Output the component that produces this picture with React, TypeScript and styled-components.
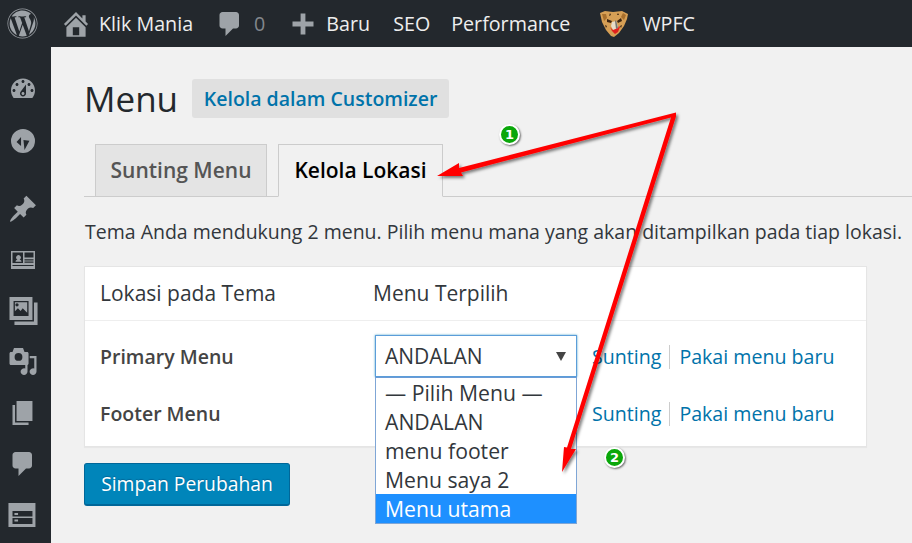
import React from 'react';
import styled, { createGlobalStyle } from 'styled-components';
import { FaWordpress } from 'react-icons/fa';

const GlobalStyle = createGlobalStyle`
    html, body { margin: 0; padding: 0; background: #f1f1f1; }
    body { font-family: "Open Sans", "Noto Sans", sans-serif; overflow: hidden; }
    * { box-sizing: border-box; }
`;

const Page = styled.div`
    position: relative;
    width: 912px;
    height: 543px;
    overflow: hidden;
    display: grid;
    grid-template-columns: 51px 1fr;
    grid-template-rows: 47px 1fr;
    background: #f1f1f1;
    color: #32373c;
`;

const TopBar = styled.header`
    grid-column: 1 / 3;
    display: flex;
    align-items: center;
    background: #23282d;
    color: #eee;
    font-size: 19.7px;
    padding-left: 7px;
`;

const BarItem = styled.div<{ $gap?: number; $left?: number }>`
    display: flex;
    align-items: center;
    gap: ${p => p.$gap ?? 0}px;
    margin-left: ${p => p.$left ?? 0}px;
    white-space: nowrap;
`;

const BarIcon = styled.svg<{ $size?: number }>`
    width: ${p => p.$size ?? 30}px;
    height: ${p => p.$size ?? 30}px;
    fill: #9ea3a8;
    display: block;
`;

const Muted = styled.span`
    color: #82878c;
`;

const SideBar = styled.nav`
    background: #23282d;
    display: flex;
    flex-direction: column;
    align-items: center;
    padding: 27px 6px 0 0;
`;

const SideIcon = styled.svg<{ $top: number }>`
    width: 30px;
    height: 30px;
    fill: #9ea3a8;
    margin-top: ${p => p.$top}px;
    flex: none;
`;

const Content = styled.main`
    padding: 32px 0 0 33px;
`;

const TitleRow = styled.div`
    display: flex;
    align-items: center;
    gap: 14px;
    height: 39px;
`;

const Title = styled.h1`
    margin: 0;
    font-size: 35px;
    font-weight: 400;
    line-height: 39px;
    color: #23282d;
`;

const CustomizerLink = styled.a`
    display: flex;
    align-items: center;
    height: 39px;
    width: 257px;
    justify-content: center;
    background: #e0e0e0;
    border-radius: 3px;
    color: #0073aa;
    font-size: 19.5px;
    font-weight: 600;
`;

const Tabs = styled.div`
    display: flex;
    gap: 11px;
    margin-top: 26px;
    padding-left: 11px;
    border-bottom: 1px solid #ccc;
    height: 53px;
`;

const Tab = styled.div<{ $active?: boolean; $width: number }>`
    width: ${p => p.$width}px;
    height: 53px;
    display: flex;
    align-items: center;
    justify-content: center;
    border: 1px solid #ccc;
    border-bottom: ${p => (p.$active ? '1px solid #f1f1f1' : '1px solid #ccc')};
    background: ${p => (p.$active ? '#f1f1f1' : '#e4e4e4')};
    color: ${p => (p.$active ? '#000' : '#555')};
    font-size: 21px;
    font-weight: 600;
    padding-bottom: 2px;
`;

const Intro = styled.p`
    margin: 21px 0 0 1px;
    font-size: 19.5px;
    line-height: 28px;
    white-space: nowrap;
`;

const Card = styled.section`
    margin-top: 20px;
    width: 783px;
    height: 181px;
    background: #fff;
    border: 1px solid #e5e5e5;
    box-shadow: 0 1px 1px rgba(0, 0, 0, 0.04);
`;

const HeadRow = styled.div`
    display: grid;
    grid-template-columns: 273px 1fr;
    align-items: center;
    padding: 0 0 2px 15px;
    height: 54px;
    font-size: 21px;
    border-bottom: 1px solid #eee;
`;

const RowList = styled.div`
    padding-top: 7px;
`;

const Row = styled.div`
    display: grid;
    grid-template-columns: 273px 219px 1fr;
    align-items: center;
    padding-left: 15px;
    height: 57px;
`;

const RowLabel = styled.div`
    font-weight: 600;
    font-size: 19.5px;
    color: #444;
`;

const SelectBox = styled.div`
    position: relative;
    margin: 0 0 1px 2px;
    width: 202px;
    height: 42px;
    display: flex;
    align-items: center;
    padding-left: 9px;
    background: #fff;
    border: 1px solid #5b9dd9;
    box-shadow: 0 0 2px rgba(30, 140, 190, 0.8);
    color: #32373c;
    font-size: 21px;
`;

const Caret = styled.span`
    position: absolute;
    right: 10px;
    top: 16px;
    width: 0;
    height: 0;
    border-left: 5px solid transparent;
    border-right: 5px solid transparent;
    border-top: 9px solid #444;
`;

const Dropdown = styled.ul`
    position: absolute;
    left: -1px;
    top: 41px;
    width: 202px;
    margin: 0;
    padding: 0;
    list-style: none;
    background: #fff;
    border: 1px solid #7fa6d6;
    border-top: 1px solid #6a9bd6;
    z-index: 2;
`;

const Option = styled.li<{ $selected?: boolean }>`
    height: 29px;
    line-height: 29px;
    padding-left: 9px;
    font-size: 21.2px;
    white-space: nowrap;
    background: ${p => (p.$selected ? '#1e90ff' : 'transparent')};
    color: ${p => (p.$selected ? '#fff' : '#32373c')};
`;

const Links = styled.div`
    display: flex;
    align-items: center;
    font-size: 19.6px;
    color: #0073aa;
`;

const Divider = styled.span`
    width: 1px;
    height: 24px;
    background: #ccc;
    margin: 0 9px 0 8px;
`;

const SaveButton = styled.button`
    display: block;
    margin-top: 16px;
    width: 206px;
    height: 43px;
    border: 1px solid #006799;
    border-bottom-width: 2px;
    border-radius: 3px;
    background: #0085ba;
    color: #fff;
    font-family: inherit;
    font-size: 19.3px;
    padding: 0 0 2px;
    text-shadow: 0 -1px 1px #006799;
`;

const ArrowLayer = styled.svg`
    position: absolute;
    inset: 0;
    width: 912px;
    height: 543px;
    pointer-events: none;
    z-index: 3;
`;

const Badge = styled.span<{ $x: number; $y: number }>`
    position: absolute;
    left: ${p => p.$x}px;
    top: ${p => p.$y}px;
    width: 21px;
    height: 21px;
    border-radius: 50%;
    background: #0aa70a;
    border: 2px solid #fff;
    box-shadow: 1px 1px 2px rgba(0, 0, 0, 0.55);
    color: #fff;
    font: 700 13px/17px "DejaVu Sans", sans-serif;
    text-align: center;
    z-index: 4;
`;

const Home = () => (
    <BarIcon $size={32} viewBox="0 0 20 20"><path d="M16 8.5l1.53 1.53-1.06 1.06L10 4.62l-6.47 6.47-1.06-1.06L10 2.5l4 4v-2h2v4zm-6-2.46l6 5.99V18H4v-5.97zM12 17v-5H8v5h4z" /></BarIcon>
);

const Comment = () => (
    <BarIcon viewBox="0 0 20 20"><path d="M5 2h9c1.1 0 2 .9 2 2v7c0 1.1-.9 2-2 2h-2l-5 5v-5H5c-1.1 0-2-.9-2-2V4c0-1.100.9-2 2-2z" /></BarIcon>
);

const Plus = () => (
    <BarIcon viewBox="0 0 20 20"><path d="M17 8.400v3.200h-5.400V17H8.400v-5.400H3V8.400h5.400V3h3.200v5.400H17z" /></BarIcon>
);

// the WPFC cheetah head
const Tiger = () => (
    <svg width="30" height="28" viewBox="0 0 30 28" style={{ display: 'block' }}>
        <path d="M1 3l5-2 8 1 9-1 6 3-1 5-3 7-5 7-5 4-3-1-5-6-4-8z" fill="#d69f55" />
        <path d="M3 4l4 0 1 4-3 3zM24 3l3 2-2 5-3-3z" fill="#a86f2c" />
        <path d="M8 9l5 2-1 2-4-1zM22 8l-4 3 1 2 4-2zM11 3l1 2-2 1zM19 3l1 2-2 0zM6 15l2 1-1 2zM23 15l-1 3-1-2z" fill="#3d2410" />
        <path d="M13 12l4-1 3 8-5 3-3-6z" fill="#e8dcc8" />
        <path d="M17 10l2 8-2 1-1-8z" fill="#77756f" />
        <path d="M11 17l3 3 5-2 1-2 1 1-2 5-3 2-3-3z" fill="#e0201c" />
    </svg>
);

const sideIcons = [
    { top: 0, d: 'M3.76 16h12.48c1.100-1.370 1.760-3.110 1.760-5 0-4.420-3.580-8-8-8s-8 3.580-8 8c0 1.890.660 3.630 1.760 5zM10 4c.550 0 1 .450 1 1s-.450 1-1 1-1-.450-1-1 .450-1 1-1zM6 6c.550 0 1 .450 1 1s-.450 1-1 1-1-.450-1-1 .450-1 1-1zm8 0c.550 0 1 .450 1 1s-.450 1-1 1-1-.450-1-1 .450-1 1-1zm-5.370 5.550L12 7v6c0 1.100-.900 2-2 2s-2-.900-2-2c0-.570.240-1.080.630-1.450zM4 10c.550 0 1 .450 1 1s-.450 1-1 1-1-.450-1-1 .450-1 1-1zm12 0c.550 0 1 .450 1 1s-.450 1-1 1-1-.450-1-1 .450-1 1-1zm-5 3c0-.550-.450-1-1-1s-1 .450-1 1 .450 1 1 1 1-.450 1-1z' },
    { top: 22, d: 'M10 2a8 8 0 1 1 0 16 8 8 0 0 1 0-16zM8.700 7.300L5.700 10.700l3 2.600zM10.300 9.300l4 .5-3.300 6.200z' },
    { top: 38, d: 'M10.440 3.020l1.820-1.820 6.360 6.350-1.830 1.820c-1.050-.680-2.480-.570-3.410.360l-.750.750c-.920.930-1.040 2.350-.350 3.410l-1.830 1.820-2.410-2.410-2.800 2.790c-.420.420-3.380 2.710-3.800 2.290s1.860-3.390 2.280-3.810l2.790-2.790L4.100 9.360l1.830-1.820c1.050.690 2.480.570 3.400-.360l.750-.750c.930-.920 1.050-2.350.360-3.410z' },
    { top: 22, d: 'M2 3.300h16v12H2zM3 4.300v7h7v-7zM11 4.300v3.400h6V4.300zM11 8.800v.8h6v-.8zM11 10.400v.8h6v-.8zM3 12.600v.8h14v-.8zM5 10.500c0-1 .8-1.300 1.300-1.500a1.500 1.500 0 1 1 1.400 0c.5.200 1.300.500 1.300 1.500z' },
    { top: 20, d: 'M1 .700h15.300V16H1zM3.700 3.400v10h10v-10zM4.600 4.200h8.200v7l-3-3-1.400 1.800-1.800-1.800-2 2zM6 4.800a1.100 1.100 0 1 0 0 2.200 1.100 1.100 0 0 0 0-2.200zM17.300 4.300h2.400v15H4.300v-2.300h13z' },
    { top: 20, d: 'M4 1.300h6L11 4h1.700c.6 0 1 .4 1 1v6.700c0 .6-.4 1-1 1H2c-.6 0-1-.4-1-1V5c0-.6.4-1 1-1h1zM7 4.700a2.600 2.600 0 1 0 0 5.200 2.600 2.600 0 0 0 0-5.200zM14.500 6.700H19v10.300a2.300 2.200 0 1 1-1.500-2V8.200h-3zM11.500 12.700H13v4.300a2.300 2.200 0 1 1-1.500-2z' },
    { top: 21, d: 'M5.700 2.700h10.600V16H5.700zM3 5.300h1.700v11.700h9v1.700H3z' },
    { top: 22, d: 'M5 2h9c1.100 0 2 .900 2 2v7c0 1.100-.900 2-2 2h-2l-5 5v-5H5c-1.100 0-2-.900-2-2V4c0-1.100.900-2 2-2z' },
    { top: 21, d: 'M.300 2h18v16H.300zM3 7.300v8.700h13.300V7.300zM3 11h13.300v1H3zM4.300 8.700h2.400v1.300H4.300zM4.300 13h2.400v1.300H4.300z' },
];

const locations = [
    { name: 'Primary Menu', open: true },
    { name: 'Footer Menu', open: false },
];

const menuOptions = ['— Pilih Menu —', 'ANDALAN', 'menu footer', 'Menu saya 2', 'Menu utama'];

export default function App() {
    return (
        <Page>
            <GlobalStyle />
            <TopBar>
                <FaWordpress size={31} color="#9ea3a8" />
                <BarItem $gap={7} $left={22}><Home /><span>Klik Mania</span></BarItem>
                <BarItem $gap={9} $left={22}><Comment /><Muted>0</Muted></BarItem>
                <BarItem $gap={8} $left={23}><Plus /><span>Baru</span></BarItem>
                <BarItem $left={23}>SEO</BarItem>
                <BarItem $left={21}>Performance</BarItem>
                <BarItem $gap={13} $left={29}><Tiger /><span>WPFC</span></BarItem>
            </TopBar>
            <SideBar>
                {sideIcons.map((icon, i) => (
                    <SideIcon key={i} $top={icon.top} viewBox="0 0 20 20"><path fillRule="evenodd" d={icon.d} /></SideIcon>
                ))}
            </SideBar>
            <Content>
                <TitleRow>
                    <Title>Menu</Title>
                    <CustomizerLink>Kelola dalam Customizer</CustomizerLink>
                </TitleRow>
                <Tabs>
                    <Tab $width={172}>Sunting Menu</Tab>
                    <Tab $width={165} $active>Kelola Lokasi</Tab>
                </Tabs>
                <Intro>Tema Anda mendukung 2 menu. Pilih menu mana yang akan ditampilkan pada tiap lokasi.</Intro>
                <Card>
                    <HeadRow>
                        <div>Lokasi pada Tema</div>
                        <div>Menu Terpilih</div>
                    </HeadRow>
                    <RowList>
                        {locations.map(loc => (
                            <Row key={loc.name}>
                                <RowLabel>{loc.name}</RowLabel>
                                <div>
                                    {loc.open && (
                                        <SelectBox>
                                            ANDALAN
                                            <Caret />
                                            <Dropdown>
                                                {menuOptions.map(opt => (
                                                    <Option key={opt} $selected={opt === 'Menu utama'}>{opt}</Option>
                                                ))}
                                            </Dropdown>
                                        </SelectBox>
                                    )}
                                </div>
                                <Links>
                                    <span>Sunting</span>
                                    <Divider />
                                    <span>Pakai menu baru</span>
                                </Links>
                            </Row>
                        ))}
                    </RowList>
                </Card>
                <SaveButton>Simpan Perubahan</SaveButton>
            </Content>
            <ArrowLayer viewBox="0 0 912 543">
                <defs>
                    <filter id="arrowShadow" x="-10%" y="-10%" width="120%" height="120%">
                        <feDropShadow dx="2" dy="2" stdDeviation="1.5" floodColor="#000" floodOpacity="0.5" />
                    </filter>
                </defs>
                <g filter="url(#arrowShadow)" fill="#f00">
                    <path d="M676 112.500L459 168 459 163 437 176 463 176 461 172.500 671 117.500 567 447.500 564 447 562 472 576 449 571 449 676 116.500z" />
                </g>
            </ArrowLayer>
            <Badge $x={499} $y={124}>1</Badge>
            <Badge $x={604} $y={447}>2</Badge>
        </Page>
    );
}
